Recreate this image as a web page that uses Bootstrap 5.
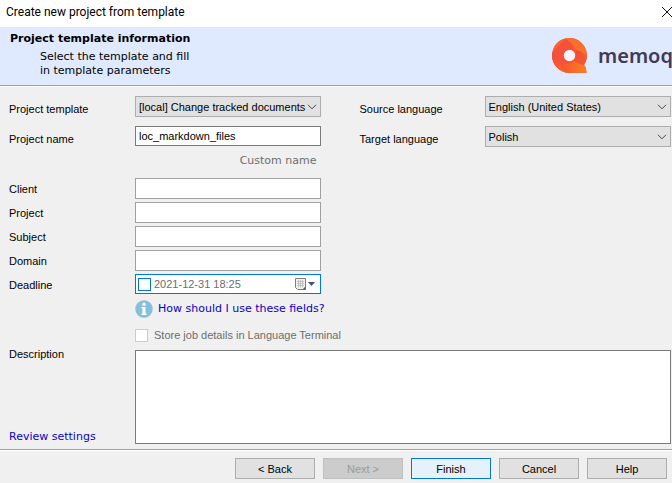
<!DOCTYPE html>
<html lang="en">
<head>
<meta charset="utf-8">
<meta name="viewport" content="width=device-width, initial-scale=1">
<title>Create new project from template</title>
<link href="https://cdn.jsdelivr.net/npm/bootstrap@5.3.0/dist/css/bootstrap.min.css" rel="stylesheet">
<style>
body { background: #f0f0f0; color: #000; font: 11px/16px "Liberation Sans", Arial, sans-serif; }
.titlebar { height: 27px; padding: 0 0 3px 6px; font-family: "Roboto", sans-serif; font-size: 12px; }
.close-btn { border: 0; background: none; padding: 0; line-height: 0; }
.banner { background: #dfe9ff; height: 59px; padding-left: 10px; border-bottom: 1px solid #a0a0a0; box-shadow: 0 1px #fff; }
.wide-text { font-family: "DejaVu Sans", sans-serif; font-size: 11px; line-height: 14px; }
.banner h1 { font-weight: 700; margin: 5px 0 4px; }
.banner p { margin: 0 0 0 30px; }
.brand { width: 120px; gap: 10px; color: #413a57; font: 600 20px/28px "Noto Sans", sans-serif; }
.dialog-form { padding: 10px 1px 5px 9px; }
.halves { gap: 39px; }
.half { flex: 1 1 0; min-width: 0; }
.field-label { flex: 0 0 126px; padding-top: 5px; }
.languages .field-label { flex-basis: 125px; }
.box { font: inherit; height: 21px; padding: 0 3px; border: 1px solid #a0a0a0; border-radius: 0; background-color: #fff; color: #000; min-width: 0; }
select.box { border-color: #adadad; background: #e1e1e1 url("data:image/svg+xml,%3Csvg xmlns='http://www.w3.org/2000/svg' width='10' height='6'%3E%3Cpath d='M1 .8 5 4.8 9 .8' fill='none' stroke='%23444'/%3E%3C/svg%3E") no-repeat right 3px center; appearance: none; }
.box.dark { border-color: #7a7a7a; }
.name-row { margin-top: 9px; }
.name-row input { height: 20px; margin-bottom: 1px; }
.muted { color: #6d6d6d; }
.custom { margin: 7px 4px 10px 0; }
.stack { gap: 3px; }
.stack .field-label { padding-top: 3px; }
.stack .deadline { height: 20px; padding: 0 4px 0 2px; border-color: #0078d7; }
.deadline input[type=text] { border: 0; padding: 0; margin-left: 3px; background: none; font: inherit; min-width: 0; }
.tick { appearance: none; width: 13px; height: 13px; margin: 0; border: 1px solid #ccc; background: #fff; flex: none; }
.deadline .tick { border-color: #0078d7; }
.picker { border: 0; background: none; padding: 0; line-height: 0; }
a { color: #0b00c4; text-decoration: none; }
.indent { margin-left: 126px; }
.help { gap: 5px; margin: 6px 0 9px; }
.store-row { gap: 6px; margin-bottom: 3px; }
.notes { height: 94px; margin-top: 4px; resize: none; }
.side { flex: 0 0 126px; }
.footer-bar { border-top: 1px solid #a0a0a0; box-shadow: inset 0 1px #fff; padding: 8px 5px 4px; gap: 8px; }
.cmd { width: 80px; height: 21px; padding: 0; font: inherit; border: 1px solid #adadad; border-radius: 0; background: #e1e1e1; color: #000; }
.cmd:disabled { background: #ccc; border-color: #bfbfbf; color: #9a9a9a; opacity: 1; }
.cmd.main { background: #e5f1fb; border-color: #0078d7; }
</style>
<script src="https://cdn.jsdelivr.net/npm/bootstrap@5.3.0/dist/js/bootstrap.bundle.min.js"></script>
</head>
<body class="overflow-hidden">
<header>
  <div class="titlebar bg-white d-flex align-items-center justify-content-between">
    <span>Create new project from template</span>
    <button class="close-btn" type="button" aria-label="Close"><svg width="11" height="12"><path d="M1 1 11 11M11 1 1 11" stroke="#111" fill="none"/></svg></button>
  </div>
  <div class="banner d-flex justify-content-between">
    <div class="wide-text">
      <h1 class="wide-text">Project template information</h1>
      <p>Select the template and fill<br>in template parameters</p>
    </div>
    <div class="brand d-flex align-items-center overflow-hidden">
      <svg class="flex-shrink-0" width="36" height="36" viewBox="0 0 36 36" aria-hidden="true">
        <defs>
          <linearGradient id="arc" x1="0" y1="0" x2="1" y2="1"><stop offset="0" stop-color="#f2483c"/><stop offset=".6" stop-color="#f4562f"/></linearGradient>
          <linearGradient id="left" x1="0" y1="0" x2="0" y2="1"><stop offset="0" stop-color="#f2483c"/><stop offset="1" stop-color="#f7642c"/></linearGradient>
          <linearGradient id="tail" x1="0" y1="0" x2="1" y2="0"><stop offset="0" stop-color="#f4562f"/><stop offset="1" stop-color="#f98023"/></linearGradient>
        </defs>
        <path d="M17.500 0A17.500 17.500 0 0 0 17.500 35H34.500Q34.300 29 32 27A17.500 17.500 0 0 0 17.500 0Z" fill="#f4513a"/>
        <path d="M13 .6A17.500 17.500 0 0 1 34.800 20Q31 13 23.500 12 20 4 13 .6Z" fill="#f8702a"/>
        <path d="M23.500 12Q31 13 34.800 20A17.500 17.500 0 0 1 32 27Q25 26 22 22 25 17 23.500 12Z" fill="url(#arc)"/>
        <path d="M2 9A17.500 17.500 0 0 1 13 .6Q9 6 5 9 3 12 .5 14Z" fill="#f7682d"/>
        <path d="M.3 14A17.500 17.500 0 0 0 17.500 35Q9 31 7.500 22 3 19 .3 14Z" fill="url(#left)"/>
        <path d="M9 24Q16 27 23 23 26 26 32 27 34.300 29 34.500 35H17.500Q12 31 9 24Z" fill="url(#tail)"/>
        <circle cx="17.500" cy="17.500" r="5.700" fill="#f4f4ff"/>
      </svg>
      <span>memoq</span>
    </div>
  </div>
</header>
<main class="dialog-form">
  <div class="halves d-flex">
    <div class="half">
      <div class="d-flex"><label class="field-label" for="tpl">Project template</label><select class="box flex-fill" id="tpl"><option>[local] Change tracked documents</option></select></div>
      <div class="name-row d-flex"><label class="field-label" for="name">Project name</label><input class="box dark flex-fill" id="name" value="loc_markdown_files"></div>
      <div class="custom wide-text muted text-end">Custom name</div>
      <div class="stack d-flex flex-column">
        <div class="d-flex"><label class="field-label" for="client">Client</label><input class="box flex-fill" id="client"></div>
        <div class="d-flex"><label class="field-label" for="project">Project</label><input class="box flex-fill" id="project"></div>
        <div class="d-flex"><label class="field-label" for="subject">Subject</label><input class="box flex-fill" id="subject"></div>
        <div class="d-flex"><label class="field-label" for="domain">Domain</label><input class="box flex-fill" id="domain"></div>
        <div class="d-flex"><label class="field-label" for="deadline">Deadline</label>
          <div class="box deadline flex-fill d-flex align-items-center">
            <input class="tick" type="checkbox" aria-label="Use deadline">
            <input class="muted flex-fill" type="text" id="deadline" value="2021-12-31 18:25">
            <button class="picker" type="button" aria-label="Open calendar"><svg width="22" height="14"><path d="M1.500 1.500h10v11h-8l-2-2z" fill="#f2f0f0" stroke="#86797a"/><path d="M3 4.500h7M3 6.500h7M3 8.500h7M4.500 3v7.500M6.500 3v7.500M8.500 3v7.500" stroke="#b5b5b5" stroke-width=".7"/><path d="M8.500 12.500l3-3v3z" fill="#5d5053"/><path d="M14 5h7l-3.500 4z" fill="#3b557d"/></svg></button>
          </div></div>
      </div>
    </div>
    <div class="half languages">
      <div class="d-flex"><label class="field-label" for="src">Source language</label><select class="box flex-fill" id="src"><option>English (United States)</option></select></div>
      <div class="name-row d-flex"><label class="field-label" for="trg">Target language</label><select class="box flex-fill" id="trg"><option>Polish</option></select></div>
    </div>
  </div>
  <div class="indent">
    <div class="help d-flex align-items-center">
      <svg class="flex-shrink-0" width="18" height="18" viewBox="0 0 18 18" aria-hidden="true"><circle cx="9" cy="9" r="8.700" fill="#86bfdc"/><circle cx="9" cy="4.200" r="1.700" fill="#fff"/><path d="M6.500 7H10.500V13.500H11.500V15H6.500V13.500H7.500V8.500H6.500Z" fill="#fff"/></svg>
      <a href="#" class="wide-text">How should I use these fields?</a>
    </div>
    <div class="store-row d-flex align-items-center"><input class="tick" type="checkbox" id="store"><label class="muted" for="store">Store job details in Language Terminal</label></div>
  </div>
  <div class="d-flex">
    <div class="side d-flex flex-column justify-content-between align-items-start"><label for="notes">Description</label><a class="wide-text" href="#">Review settings</a></div>
    <textarea class="box dark notes flex-fill" id="notes"></textarea>
  </div>
</main>
<footer class="footer-bar d-flex justify-content-end">
  <button class="cmd" type="button">&lt; Back</button><button class="cmd" type="button" disabled>Next &gt;</button><button class="cmd main" type="button">Finish</button><button class="cmd" type="button">Cancel</button><button class="cmd" type="button">Help</button>
</footer>
</body>
</html>
